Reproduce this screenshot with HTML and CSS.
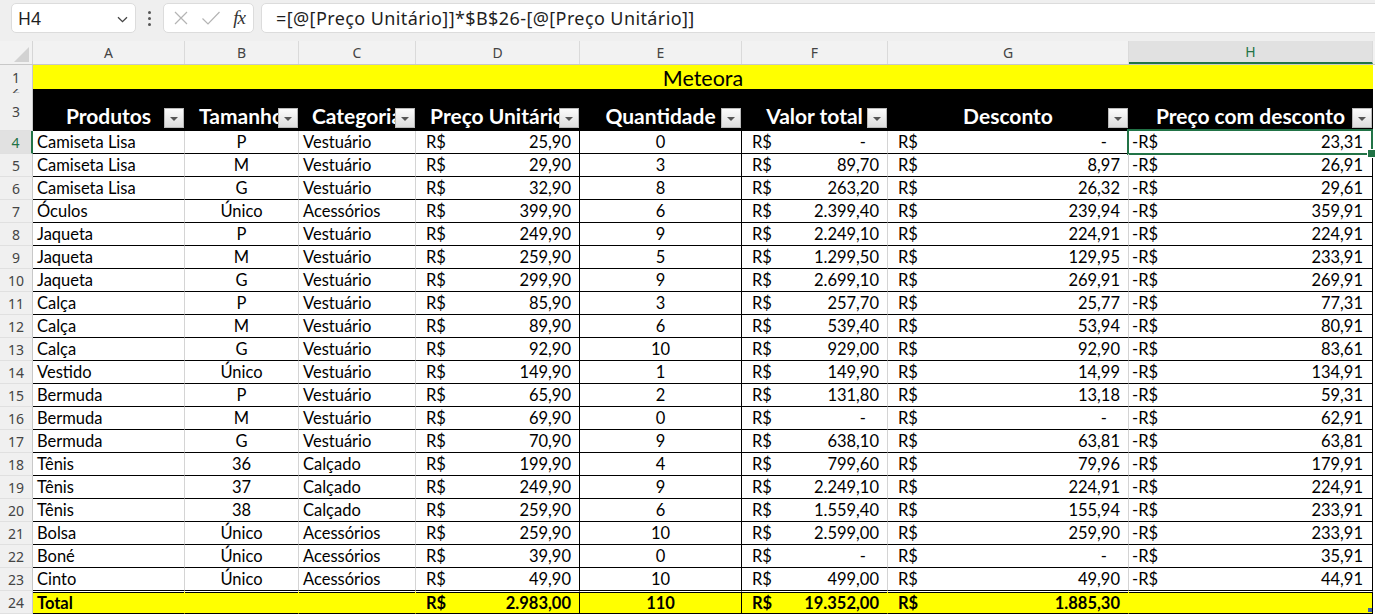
FILE: index.html
```html
<!DOCTYPE html>
<html lang="pt-BR">
<head>
  <meta charset="UTF-8" />
  <title>Meteora - Planilha</title>
  <link rel="stylesheet" href="styles.css">
</head>
<body>
  <div class="barra-formula">
    <div class="caixa-nome">
      <span>H4</span>
      <svg class="seta" width="11" height="7" viewBox="0 0 11 7"><path d="M1 1.2 L5.5 5.6 L10 1.2" fill="none" stroke="#444" stroke-width="1.3"/></svg>
    </div>
    <div class="pontos"><i></i><i></i><i></i></div>
    <div class="caixa-fx">
      <svg width="16" height="16" viewBox="0 0 16 16"><path d="M2 2 L14 14 M14 2 L2 14" stroke="#b4b4b4" stroke-width="1.2"/></svg>
      <svg width="20" height="16" viewBox="0 0 20 16"><path d="M1.5 8.5 L7 14 L18.5 2" fill="none" stroke="#b4b4b4" stroke-width="1.2"/></svg>
      <span class="fx">fx</span>
    </div>
    <div class="caixa-formula">=[@[Preço Unitário]]*$B$26-[@[Preço Unitário]]</div>
  </div>

  <div class="planilha">
    <div class="row cabecalho-colunas">
      <div class="canto"><span></span></div>
      <div class="letra">A</div>
      <div class="letra">B</div>
      <div class="letra">C</div>
      <div class="letra">D</div>
      <div class="letra">E</div>
      <div class="letra">F</div>
      <div class="letra">G</div>
      <div class="letra ativo">H</div>
    </div>

    <div class="row linha-titulo">
      <div class="rh">1</div>
      <div class="titulo">Meteora</div>
    </div>

    <div class="row linha-2">
      <div class="rh"><span>2</span></div>
      <div class="preto"></div>
    </div>

    <div class="row linha-cab">
      <div class="rh">3</div>
      <div class="c th">Produtos<span class="filtro"></span></div>
      <div class="c th">Tamanho<span class="filtro"></span></div>
      <div class="c th">Categoria<span class="filtro"></span></div>
      <div class="c th">Preço Unitário<span class="filtro"></span></div>
      <div class="c th">Quantidade<span class="filtro"></span></div>
      <div class="c th">Valor total<span class="filtro"></span></div>
      <div class="c th">Desconto<span class="filtro"></span></div>
      <div class="c th">Preço com desconto<span class="filtro"></span></div>
    </div>

    <div id="corpo"></div>

    <div class="row linha-total">
      <div class="rh">24</div>
      <div class="c esq">Total</div>
      <div class="c"></div>
      <div class="c"></div>
      <div class="c moeda bk"><span>R$</span><span>2.983,00</span></div>
      <div class="c meio bk">110</div>
      <div class="c moeda"><span>R$</span><span>19.352,00</span></div>
      <div class="c moeda"><span>R$</span><span>1.885,30</span></div>
      <div class="c bk ultima"><span class="alca"></span></div>
    </div>
  </div>

  <script>
    const dados = [
      ['Camiseta Lisa', 'P', 'Vestuário', '25,90', '0', '-', '-', '23,31'],
      ['Camiseta Lisa', 'M', 'Vestuário', '29,90', '3', '89,70', '8,97', '26,91'],
      ['Camiseta Lisa', 'G', 'Vestuário', '32,90', '8', '263,20', '26,32', '29,61'],
      ['Óculos', 'Único', 'Acessórios', '399,90', '6', '2.399,40', '239,94', '359,91'],
      ['Jaqueta', 'P', 'Vestuário', '249,90', '9', '2.249,10', '224,91', '224,91'],
      ['Jaqueta', 'M', 'Vestuário', '259,90', '5', '1.299,50', '129,95', '233,91'],
      ['Jaqueta', 'G', 'Vestuário', '299,90', '9', '2.699,10', '269,91', '269,91'],
      ['Calça', 'P', 'Vestuário', '85,90', '3', '257,70', '25,77', '77,31'],
      ['Calça', 'M', 'Vestuário', '89,90', '6', '539,40', '53,94', '80,91'],
      ['Calça', 'G', 'Vestuário', '92,90', '10', '929,00', '92,90', '83,61'],
      ['Vestido', 'Único', 'Vestuário', '149,90', '1', '149,90', '14,99', '134,91'],
      ['Bermuda', 'P', 'Vestuário', '65,90', '2', '131,80', '13,18', '59,31'],
      ['Bermuda', 'M', 'Vestuário', '69,90', '0', '-', '-', '62,91'],
      ['Bermuda', 'G', 'Vestuário', '70,90', '9', '638,10', '63,81', '63,81'],
      ['Tênis', '36', 'Calçado', '199,90', '4', '799,60', '79,96', '179,91'],
      ['Tênis', '37', 'Calçado', '249,90', '9', '2.249,10', '224,91', '224,91'],
      ['Tênis', '38', 'Calçado', '259,90', '6', '1.559,40', '155,94', '233,91'],
      ['Bolsa', 'Único', 'Acessórios', '259,90', '10', '2.599,00', '259,90', '233,91'],
      ['Boné', 'Único', 'Acessórios', '39,90', '0', '-', '-', '35,91'],
      ['Cinto', 'Único', 'Acessórios', '49,90', '10', '499,00', '49,90', '44,91']
    ];

    function moeda(simbolo, valor, classes) {
      const traco = valor === '-' ? ' class="traco"' : '';
      return `<div class="c moeda ${classes}"><span>${simbolo}</span><span${traco}>${valor}</span></div>`;
    }

    const corpo = document.getElementById('corpo');

    dados.forEach((d, i) => {
      const n = i + 4;
      const linha = document.createElement('div');
      linha.className = 'row';
      linha.innerHTML = `
        <div class="rh${n === 4 ? ' ativo' : ''}">${n}</div>
        <div class="c esq">${d[0]}</div>
        <div class="c meio">${d[1]}</div>
        <div class="c esq">${d[2]}</div>
        ${moeda('R$', d[3], 'bk')}
        <div class="c meio bk">${d[4]}</div>
        ${moeda('R$', d[5], '')}
        ${moeda('R$', d[6], '')}
        ${moeda('-R$', d[7], 'bk neg' + (n === 4 ? ' sel' : ''))}
      `;
      corpo.appendChild(linha);
    });
  </script>
</body>
</html>
```

FILE: styles.css
```css
* {
  box-sizing: border-box;
}

body {
  margin: 0;
  width: 1375px;
  height: 616px;
  overflow: hidden;
  background: #fff;
  font-family: 'Lato', sans-serif;
}

/* barra de fórmulas */

.barra-formula {
  height: 41px;
  background: #efefef;
  display: flex;
  align-items: flex-start;
  padding: 3px 0 0 11px;
  font-family: 'Noto Sans', sans-serif;
  color: #1f1f1f;
}

.caixa-nome,
.caixa-fx,
.caixa-formula {
  height: 30px;
  background: #fff;
  border: 1px solid #dcdcdc;
  border-radius: 5px;
  display: flex;
  align-items: center;
}

.caixa-nome {
  width: 125px;
  justify-content: space-between;
  padding: 0 7px 0 6px;
  font-size: 17.5px;
}

.seta {
  margin-top: 2px;
}

.pontos {
  width: 27px;
  height: 30px;
  display: flex;
  flex-direction: column;
  align-items: center;
  justify-content: center;
  gap: 3px;
}

.pontos i {
  width: 3px;
  height: 3px;
  background: #555;
  border-radius: 50%;
}

.caixa-fx {
  width: 91px;
  padding: 0 8px 0 9px;
  justify-content: space-between;
}

.fx {
  font-family: 'Liberation Serif', serif;
  font-style: italic;
  font-size: 19px;
  color: #333;
  letter-spacing: -1px;
}

.caixa-formula {
  flex: 1;
  margin: 0 -6px 0 7px;
  padding-left: 14px;
  font-size: 18px;
  letter-spacing: 0.4px;
}

/* grade */

.row {
  display: grid;
  grid-template-columns: 33px 152px 114px 117px 164px 162px 146px 241px 244px;
  height: 23px;
}

.rh {
  background: #f0f0f0;
  border-right: 1px solid #c8c8c8;
  border-bottom: 1px solid #e0e0e0;
  font-family: 'Noto Sans', sans-serif;
  font-size: 14px;
  color: #444;
  display: flex;
  align-items: center;
  justify-content: center;
  overflow: hidden;
}

.rh.ativo {
  background: #e1e1e1;
  color: #217346;
  border-right: 2px solid #217346;
}

.cabecalho-colunas {
  height: 24px;
  background: #f2f2f2;
  border-bottom: 1px solid #c8c8c8;
}

.canto {
  border-right: 1px solid #d6d6d6;
  display: flex;
  align-items: flex-end;
  justify-content: flex-end;
  padding: 0 3px 2px 0;
}

.canto span {
  width: 0;
  height: 0;
  border-left: 15px solid transparent;
  border-bottom: 15px solid #d2d2d2;
}

.letra {
  border-right: 1px solid #dadada;
  font-family: 'Noto Sans', sans-serif;
  font-size: 14px;
  color: #444;
  display: flex;
  align-items: center;
  justify-content: center;
}

.letra.ativo {
  background: #e1e1e1;
  color: #217346;
  border-bottom: 2px solid #217346;
}

.linha-titulo {
  height: 24px;
}

.titulo {
  grid-column: 2 / -1;
  background: #ffff00;
  font-size: 21.5px;
  display: flex;
  align-items: center;
  justify-content: center;
}

.linha-2 {
  height: 4px;
}

.linha-2 .rh {
  align-items: flex-start;
  border-bottom: none;
}

.linha-2 .rh span {
  display: block;
  height: 4px;
  line-height: 14px;
  overflow: hidden;
  padding-top: 0;
  transform: translateY(-7px);
  height: 11px;
}

.preto {
  grid-column: 2 / -1;
  background: #000;
}

.linha-cab {
  height: 38px;
}

/* células */

.c {
  position: relative;
  border-right: 1px solid #d4d4d4;
  border-bottom: 1px solid #000;
  font-size: 16.5px;
  color: #000;
  white-space: nowrap;
  overflow: hidden;
  display: flex;
  align-items: center;
  padding: 0 4px;
}

.c.bk {
  border-right-color: #000;
}

.esq {
  justify-content: flex-start;
}

.meio {
  justify-content: center;
}

.moeda {
  justify-content: space-between;
  padding: 0 8px 0 10px;
}

.moeda.neg {
  padding: 0 9px 0 3px;
}

.traco {
  padding-right: 13px;
}

.th {
  background: #000;
  border-color: #000;
  color: #fff;
  font-weight: bold;
  font-size: 21px;
  justify-content: center;
  align-items: flex-end;
  padding: 0 0 2px;
}

.filtro {
  position: absolute;
  right: 0;
  bottom: 2px;
  width: 20px;
  height: 20px;
  border: 1px solid #b9b9b9;
  background: linear-gradient(#fbfbfb, #dedede);
}

.filtro::after {
  content: "";
  position: absolute;
  left: 5px;
  top: 8px;
  border-left: 4px solid transparent;
  border-right: 4px solid transparent;
  border-top: 4px solid #555;
}

.sel {
  overflow: visible;
}

.sel::after {
  content: "";
  position: absolute;
  left: -2px;
  top: -2px;
  right: -1px;
  bottom: -2px;
  border: 2px solid #217346;
}

.sel::before {
  content: "";
  position: absolute;
  right: -4px;
  bottom: -5px;
  width: 7px;
  height: 7px;
  background: #217346;
  border: 1px solid #fff;
  z-index: 2;
}

.linha-total .c {
  background: #ffff00;
  border-right-color: #ffff00;
  font-weight: bold;
  border-top: 1px solid #fff;
  box-shadow: inset 0 1px 0 #000;
}

.linha-total .c.bk {
  border-right-color: #000;
}

.linha-total .ultima {
  overflow: visible;
}

.alca {
  position: absolute;
  right: 0;
  bottom: 1px;
  width: 4px;
  height: 4px;
  background: #3d5ea8;
}
```
